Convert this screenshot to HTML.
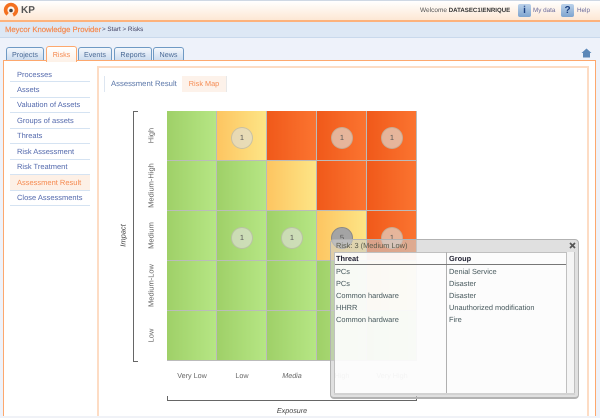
<!DOCTYPE html>
<html><head><meta charset="utf-8">
<style>
html,body{margin:0;padding:0}
body{width:600px;height:418px;overflow:hidden;position:relative;background:#fff}
#w{position:absolute;left:0;top:0;width:600px;height:418px;overflow:hidden;filter:blur(.3px);font-family:"Liberation Sans",sans-serif;font-size:7.5px;color:#445;text-rendering:geometricPrecision}
.a{position:absolute;white-space:nowrap}
.tab{position:absolute;top:47px;height:13px;border:1px solid #6f9ac4;border-bottom:0;border-radius:3px 3px 0 0;background:linear-gradient(#f4f7fb,#c9daee);color:#4a6a96;text-align:center;line-height:14px;font-size:7.2px}
.m{position:absolute;left:10px;width:80px;height:15px;line-height:15px;border-bottom:1px solid #d5e3f2;color:#5268ac;text-indent:7px;white-space:nowrap}
.c{position:absolute;width:50px;height:50px;box-sizing:border-box;border-right:1px solid #bbb;border-bottom:1px solid #bbb}
.g{background:linear-gradient(90deg,#9fd068,#b6e684)}
.y{background:linear-gradient(90deg,#fdc561,#fde586)}
.r{background:linear-gradient(90deg,#f0591a,#fb7430)}
.b{position:absolute;width:20px;height:20px;border-radius:50%;background:rgba(222,222,215,.66);border:1px solid rgba(160,160,140,.45);text-align:center;line-height:20px;color:#555;font-size:7.5px}
.v{position:absolute;transform:rotate(-90deg);transform-origin:center;width:60px;text-align:center;color:#666}
.xl{position:absolute;top:371px;width:50px;text-align:center;color:#666;font-size:7.2px}
.row{position:absolute;color:#46585c;white-space:nowrap;font-size:7.4px;line-height:11px}
</style></head><body><div id="w">
<div class="a" style="left:0;top:0;width:600px;height:1px;background:#cfd8e4"></div>
<div class="a" style="left:0;top:1px;width:600px;height:19px;background:linear-gradient(#fff,#fde7d4)"></div>
<div class="a" style="left:0;top:20px;width:600px;height:2px;background:#fdb27c"></div>
<div class="a" style="left:0;top:22px;width:600px;height:15px;background:#dde8f5;border-bottom:1px solid #c9d9ec"></div>
<div class="a" style="left:0;top:38px;width:600px;height:380px;background:#eef2fa"></div>

<svg class="a" style="left:3px;top:2px" width="18" height="16" viewBox="0 0 18 16"><circle cx="8" cy="8" r="5.400" fill="none" stroke="#f4701f" stroke-width="3.600" stroke-dasharray="28 6" transform="rotate(128 8 8)"/><circle cx="8" cy="8.500" r="1.800" fill="#444"/></svg>
<div class="a" style="left:21px;top:3px;font-size:10px;font-weight:bold;color:#555;line-height:15px">KP</div>

<div class="a" style="left:5px;top:24px;font-size:7.700px;-webkit-text-stroke:.2px #f58a50;color:#f58a50;line-height:11px">Meycor Knowledge Provider</div>
<div class="a" style="left:102px;top:24px;font-size:6.300px;color:#446;line-height:11px">&gt; Start &gt; Risks</div>

<div class="a" style="left:420px;top:5px;font-size:6.500px;color:#555;line-height:11px">Welcome <b style="color:#333;font-size:6.100px">DATASEC1\ENRIQUE</b></div>
<div class="a" style="left:518px;top:4px;width:13px;height:13px;background:linear-gradient(#bcd2ea,#7ea4cf);border-radius:2px;color:#1a3f80;font-weight:bold;font-size:10px;text-align:center;line-height:13px">i</div>
<div class="a" style="left:533px;top:5px;font-size:6.300px;color:#6a6a9a;line-height:11px">My data</div>
<div class="a" style="left:561px;top:4px;width:13px;height:13px;background:linear-gradient(#bcd2ea,#7ea4cf);border-radius:2px;color:#1a3f80;font-weight:bold;font-size:10px;text-align:center;line-height:13px">?</div>
<div class="a" style="left:577px;top:5px;font-size:6.300px;color:#6a6a9a;line-height:11px">Help</div>

<div class="tab" style="left:6px;width:36px">Projects</div>
<div class="tab" style="left:78px;width:32px">Events</div>
<div class="tab" style="left:114px;width:36px">Reports</div>
<div class="tab" style="left:153px;width:29px">News</div>

<div class="a" style="left:3px;top:60px;width:593px;height:358px;background:#fff;border:1px solid #fda86e;box-sizing:border-box;border-width:1px 1px 0 1px"></div>
<div class="tab" style="left:46px;top:46px;width:29px;height:15px;border-color:#fda86e;background:linear-gradient(#fff,#fdf1e7);color:#f58a50;z-index:2;line-height:16px">Risks</div>
<svg class="a" style="left:581px;top:48px" width="11" height="10" viewBox="0 0 11 10"><path d="M0.500 5 L5.500 0.500 L10.500 5 L9 5 V9.500 H2 V5 Z" fill="#5c88b8"/></svg>

<div class="a" style="left:3px;top:416px;width:593px;height:2px;background:#f0f2f7"></div>

<div class="a" style="left:97px;top:66px;width:492px;height:350px;border:2px solid #fddcc4;border-width:2px 2px 0 2px;box-sizing:border-box"></div>

<div class="m" style="top:67px;height:14px">Processes</div>
<div class="m" style="top:82px">Assets</div>
<div class="m" style="top:98px;height:14px;line-height:14px">Valuation of Assets</div>
<div class="m" style="top:113px">Groups of assets</div>
<div class="m" style="top:128px">Threats</div>
<div class="m" style="top:144px">Risk Assessment</div>
<div class="m" style="top:159px">Risk Treatment</div>
<div class="m" style="top:175px;background:#fdf0e6;color:#f58a50">Assessment Result</div>
<div class="m" style="top:190px">Close Assessments</div>

<div class="a" style="left:104px;top:76px;width:1px;height:16px;background:#dde6f1"></div>
<div class="a" style="left:111px;top:78px;color:#5a76a8;line-height:12px;font-size:7.700px">Assessment Result</div>
<div class="a" style="left:182px;top:76px;width:44px;height:16px;background:#fdf2ea;border-right:1px solid #e8e8e8;color:#f58a50;text-align:center;line-height:16px;font-size:7.300px">Risk Map</div>

<!-- grid -->
<div class="a" style="left:167px;top:111px;width:250px;height:1px;background:#ccc"></div>
<div class="c g" style="left:167px;top:111px"></div><div class="c y" style="left:217px;top:111px"></div><div class="c r" style="left:267px;top:111px"></div><div class="c r" style="left:317px;top:111px"></div><div class="c r" style="left:367px;top:111px"></div>
<div class="c g" style="left:167px;top:161px"></div><div class="c g" style="left:217px;top:161px"></div><div class="c y" style="left:267px;top:161px"></div><div class="c r" style="left:317px;top:161px"></div><div class="c r" style="left:367px;top:161px"></div>
<div class="c g" style="left:167px;top:211px"></div><div class="c g" style="left:217px;top:211px"></div><div class="c g" style="left:267px;top:211px"></div><div class="c y" style="left:317px;top:211px"></div><div class="c r" style="left:367px;top:211px"></div>
<div class="c g" style="left:167px;top:261px"></div><div class="c g" style="left:217px;top:261px"></div><div class="c g" style="left:267px;top:261px"></div><div class="c g" style="left:317px;top:261px"></div><div class="c y" style="left:367px;top:261px"></div>
<div class="c g" style="left:167px;top:311px"></div><div class="c g" style="left:217px;top:311px"></div><div class="c g" style="left:267px;top:311px"></div><div class="c g" style="left:317px;top:311px"></div><div class="c g" style="left:367px;top:311px"></div>

<div class="b" style="left:231px;top:127px">1</div>
<div class="b" style="left:331px;top:127px">1</div>
<div class="b" style="left:381px;top:127px">1</div>
<div class="b" style="left:231px;top:227px">1</div>
<div class="b" style="left:281px;top:227px">1</div>
<div class="b" style="left:331px;top:227px;background:#a4a4a4;border-color:#888">5</div>
<div class="b" style="left:381px;top:227px">1</div>

<div class="v" style="left:121px;top:131px">High</div>
<div class="v" style="left:121px;top:181px">Medium-High</div>
<div class="v" style="left:121px;top:231px">Medium</div>
<div class="v" style="left:121px;top:281px">Medium-Low</div>
<div class="v" style="left:121px;top:331px">Low</div>
<div class="v" style="left:93px;top:231px;font-style:italic;color:#444">Impact</div>

<div class="a" style="left:133px;top:111px;width:5px;height:251px;border:1px solid #666;border-right:0;box-sizing:border-box"></div>
<div class="a" style="left:167px;top:396px;width:250px;height:5px;border:1px solid #666;border-top:0;box-sizing:border-box"></div>

<div class="xl" style="left:167px">Very Low</div>
<div class="xl" style="left:217px">Low</div>
<div class="xl" style="left:267px;font-style:italic">Media</div>
<div class="xl" style="left:317px">High</div>
<div class="xl" style="left:367px">Very High</div>
<div class="a" style="left:267px;width:50px;top:406px;text-align:center;font-style:italic;color:#444;font-size:7.200px">Exposure</div>

<!-- popup -->
<div class="a" style="left:330px;top:239px;width:249px;height:160px;box-sizing:border-box;border:1px solid #b2b2b2;border-bottom:2px solid #b2b2b2;border-radius:4px;background:rgba(205,205,205,.62)"></div>
<div class="a" style="left:336px;top:240px;color:#5a5a4a;line-height:11px;font-size:7.400px">Risk: 3 (Medium Low)</div>
<svg class="a" style="left:569px;top:242px" width="7" height="7" viewBox="0 0 7 7"><path d="M1 1 L6 6 M6 1 L1 6" stroke="#555" stroke-width="1.700"/></svg>
<div class="a" style="left:334px;top:252px;width:233px;height:141px;box-sizing:border-box;border:1px solid #c0c0c0;border-bottom:0;background:rgba(255,255,255,.88)"></div>
<div class="a" style="left:567px;top:252px;width:8px;height:141px;background:rgba(250,250,250,.8);border-right:1px solid #c0c0c0;box-sizing:border-box"></div>
<div class="a" style="left:334px;top:393px;width:241px;height:2px;background:#d2d2d2"></div>
<div class="a" style="left:446px;top:252px;width:1px;height:141px;background:#b0b0b0"></div>
<div class="a" style="left:335px;top:264px;width:231px;height:1px;background:#777"></div>
<div class="row" style="left:336px;top:253px;font-weight:bold;color:#223">Threat</div>
<div class="row" style="left:449px;top:253px;font-weight:bold;color:#223">Group</div>
<div class="row" style="left:336px;top:266px">PCs</div><div class="row" style="left:449px;top:266px">Denial Service</div>
<div class="row" style="left:336px;top:278px">PCs</div><div class="row" style="left:449px;top:278px">Disaster</div>
<div class="row" style="left:336px;top:290px">Common hardware</div><div class="row" style="left:449px;top:290px">Disaster</div>
<div class="row" style="left:336px;top:302px">HHRR</div><div class="row" style="left:449px;top:302px">Unauthorized modification</div>
<div class="row" style="left:336px;top:314px">Common hardware</div><div class="row" style="left:449px;top:314px">Fire</div>
</div></body></html>
